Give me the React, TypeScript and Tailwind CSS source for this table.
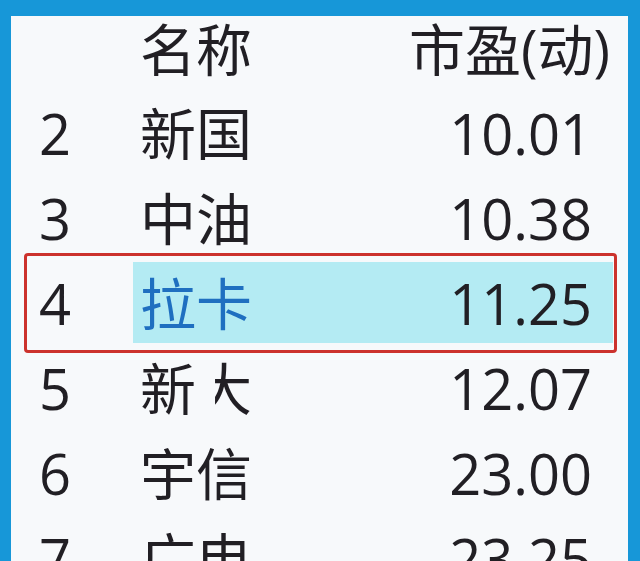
import React from "react";

type Row = { rank: string; name: React.ReactNode; pe: string; active?: boolean };

const rows: Row[] = [
  { rank: "2", name: "新国", pe: "10.01" },
  { rank: "3", name: "中油", pe: "10.38" },
  { rank: "4", name: "拉卡", pe: "11.25", active: true },
  {
    rank: "5",
    name: (
      <>
        新
        <span className="inline-block w-[56px] overflow-hidden align-top">
          <span className="inline-block w-[56px] [clip-path:inset(0_0_0_34%)]">大</span>
        </span>
      </>
    ),
    pe: "12.07",
  },
  { rank: "6", name: "宇信", pe: "23.00" },
  { rank: "7", name: "广电", pe: "23.25" },
];

const font = "font-['Open_Sans','Noto_Sans_CJK_SC',sans-serif]";

const App = () => {
  return (
    <div className="w-[640px] h-[561px] overflow-hidden bg-[#1797d8] pt-[16px] pl-[11px] pr-[12px]">
      <div className={`h-full bg-[#f7f9fb] text-[#211f24] text-[56px] leading-none ${font}`}>
        <div className="flex h-[76px] items-center pb-[10px]">
          <div className="w-[122px]" />
          <div className="pl-[7px]">名称</div>
          <div className="flex-1 text-right pr-[18px]">市盈(动)</div>
        </div>

        {rows.map((r) => (
          <div key={r.rank} className="relative flex h-[85px] items-start">
            <div className="w-[122px] h-[81px] pl-[28px] flex items-center">{r.rank}</div>
            <div
              className={`flex-1 mr-[15px] h-[81px] flex items-center ${
                r.active ? "bg-[#b4ebf3]" : ""
              }`}
            >
              <div className={`pl-[7px] ${r.active ? "text-[#1f6fc0]" : ""}`}>{r.name}</div>
              <div className="flex-1 text-right pr-[21px]">{r.pe}</div>
            </div>
            {r.active && (
              <div className="absolute left-[13px] right-[11px] -top-[9px] -bottom-[6px] rounded-[4px] border-[3px] border-[#cc322d]" />
            )}
          </div>
        ))}
      </div>
    </div>
  );
};

export default App;
